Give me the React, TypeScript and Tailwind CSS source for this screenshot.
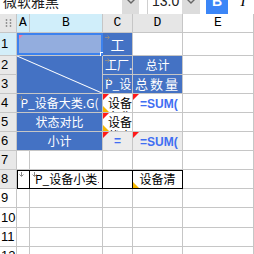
import React from "react";

const cjk = "font-['Noto_Sans_CJK_SC',sans-serif]";

function RedTri() {
  return <span className="absolute left-0 top-0 h-[6px] w-[6px] bg-[#ff1a1a] [clip-path:polygon(0_0,100%_0,0_100%)]" />;
}

function YellowTri() {
  return <span className="absolute bottom-0 left-0 h-[6px] w-[6px] bg-[#f6b800] [clip-path:polygon(0_0,0_100%,100%_100%)]" />;
}

// small gray expand markers in the corner of a cell
function Marker({ dir }: { dir: "down" | "right" }) {
  return (
    <svg className="absolute left-[2px] top-[2px]" width="5" height="5" viewBox="0 0 5 5">
      {dir === "down" ? (
        <path d="M2.5 0V4M0.5 2.5L2.5 4.5L4.5 2.5" stroke="#8a8a8a" strokeWidth="1" fill="none" />
      ) : (
        <path d="M0 2.5H4M2.5 0.5L4.5 2.5L2.5 4.5" stroke="#8a8a8a" strokeWidth="1" fill="none" />
      )}
    </svg>
  );
}

function Chevron() {
  return (
    <svg width="10" height="7" viewBox="0 0 10 7">
      <path d="M1 1L5 5L9 1" stroke="#666" strokeWidth="1.4" fill="none" />
    </svg>
  );
}

const cell = "relative overflow-hidden border-r border-b border-[#c6c6c6]";
const blue = "bg-[#4472c4] text-white";

function RowHead({ n, tone }: { n: number; tone: "sel" | "used" | "none" }) {
  const bg = tone === "sel" ? "bg-[#d3eef9]" : tone === "used" ? "bg-[#e8e8e8]" : "bg-white";
  return (
    <div className={`${cell} ${bg} flex items-center pl-[1px] font-['Liberation_Sans',sans-serif] text-[13px] text-black`}>
      {n}
    </div>
  );
}

export default function App() {
  return (
    <div className="h-[254px] w-[254px] overflow-hidden bg-white">
      {/* toolbar, mostly scrolled off the top */}
      <div className="flex h-[14px] items-end overflow-hidden bg-white">
        <div className={`flex h-[26px] w-[122px] shrink-0 items-center pl-[3px] text-[14px] text-[#222] ${cjk}`}>微软雅黑</div>
        <div className="flex h-[26px] w-[17px] shrink-0 items-center justify-center bg-[#dcdcdc]">
          <Chevron />
        </div>
        <div className="w-[8px] shrink-0" />
        <div className="flex h-[26px] w-[35px] shrink-0 items-center border-l border-[#cfcfcf] pl-[4px] font-['Liberation_Sans',sans-serif] text-[14px] text-[#222]">13.0</div>
        <div className="flex h-[26px] w-[18px] shrink-0 items-center justify-center bg-[#dcdcdc]">
          <Chevron />
        </div>
        <div className="w-[6px] shrink-0" />
        <div className="flex h-[26px] w-[22px] shrink-0 items-center justify-center bg-[#3b86f7] font-['Liberation_Sans',sans-serif] text-[14px] font-bold text-white">B</div>
        <div className="flex h-[26px] w-[30px] shrink-0 items-center justify-center font-['Liberation_Serif',serif] text-[15px] italic text-black">I</div>
      </div>

      <div className="grid grid-cols-[17px_13px_73px_30px_50px_71px] grid-rows-[19px_23px_19px_19px_19px_19px_19px_19px_19px_19px_20px_19px_19px]">
        {/* column headers */}
        <div className={`${cell} flex items-center justify-center bg-[#e6e6e6]`}>
          <svg width="7" height="8" viewBox="0 0 7 8">
            {[1, 4, 7].map((y) =>
              [1.5, 5.5].map((x) => <circle key={`${x}-${y}`} cx={x} cy={y} r="0.9" fill="#8c8c8c" />)
            )}
          </svg>
        </div>
        {[
          ["A", "bg-[#d0eefa]"],
          ["B", "bg-[#d0eefa]"],
          ["C", "bg-[#e6e6e6]"],
          ["D", "bg-[#e6e6e6]"],
          ["E", "bg-white"],
        ].map(([l, bg]) => (
          <div key={l} className={`${cell} ${bg} flex items-center justify-center font-['Liberation_Mono',monospace] text-[13px] text-black`}>
            {l}
          </div>
        ))}

        {/* row 1 */}
        <RowHead n={1} tone="sel" />
        <div className={`${cell} col-span-2 !overflow-visible bg-[#93adde]`}>
          <span className="absolute left-[2px] top-[1px] h-[5px] w-[5px] bg-[#ee7fa6] [clip-path:polygon(0_0,100%_0,0_100%)]" />
          <div className="absolute -right-[1px] bottom-0 left-0 top-0 border-2 border-[#3d82ee]" />
          <div className="absolute -bottom-[2px] -right-[3px] h-[5px] w-[5px] border border-white bg-[#3d82ee]" />
        </div>
        <div className={`${cell} ${blue} flex items-center justify-center text-[14px] ${cjk}`}>
          <Marker dir="right" />工
        </div>
        <div className={cell} />
        <div className={cell} />

        {/* row 2 */}
        <RowHead n={2} tone="used" />
        <div className={`${cell} ${blue} col-span-2 row-span-2`}>
          <svg className="absolute inset-0 h-full w-full" preserveAspectRatio="none" viewBox="0 0 100 100">
            <line x1="0" y1="0" x2="100" y2="100" stroke="white" strokeWidth="1" vectorEffect="non-scaling-stroke" />
          </svg>
        </div>
        <div className={`${cell} ${blue} flex items-center whitespace-nowrap pl-[2px] text-[12px] ${cjk}`}>
          <Marker dir="right" />工厂.
        </div>
        <div className={`${cell} ${blue} flex items-center justify-center text-[12px] ${cjk}`}>总计</div>
        <div className={cell} />

        {/* row 3 */}
        <RowHead n={3} tone="used" />
        <div className={`${cell} ${blue} flex items-center whitespace-nowrap pl-[2px] text-[12px] ${cjk}`}>
          <Marker dir="right" />P_设
        </div>
        <div className={`${cell} ${blue} flex items-center justify-center text-[13px] tracking-[2px] ${cjk}`}>总数量</div>
        <div className={cell} />

        {/* row 4 */}
        <RowHead n={4} tone="used" />
        <div className={`${cell} ${blue} col-span-2 flex items-center justify-center whitespace-nowrap text-[12px] ${cjk}`}>
          <Marker dir="down" />P_设备大类.G(
        </div>
        <div className={`${cell} whitespace-nowrap pl-[5px] pt-[2px] text-[12px] leading-[14px] text-black ${cjk}`}>
          <RedTri />
          <YellowTri />
          设备
          <br />
          名称
        </div>
        <div className={`${cell} pl-[7px] pt-[3px] font-['Liberation_Sans',sans-serif] text-[12px] font-bold leading-[14px] text-[#3f6ef2]`}>
          <RedTri />
          =SUM(
          <br />
          Sum
        </div>
        <div className={cell} />

        {/* row 5 */}
        <RowHead n={5} tone="used" />
        <div className={`${cell} ${blue} col-span-2 flex items-center justify-center text-[12px] ${cjk}`}>状态对比</div>
        <div className={`${cell} whitespace-nowrap pl-[5px] pt-[2px] text-[12px] leading-[14px] text-black ${cjk}`}>
          <RedTri />
          <YellowTri />
          设备
          <br />
          状态
        </div>
        <div className={cell} />
        <div className={cell} />

        {/* row 6 */}
        <RowHead n={6} tone="used" />
        <div className={`${cell} ${blue} col-span-2 flex items-center justify-center text-[12px] ${cjk}`}>小计</div>
        <div className={`${cell} flex items-center justify-center bg-[#ececec] font-['Liberation_Sans',sans-serif] text-[12px] font-bold text-[#3f6ef2]`}>
          <RedTri />=
        </div>
        <div className={`${cell} bg-[#ececec] pl-[7px] pt-[3px] font-['Liberation_Sans',sans-serif] text-[12px] font-bold leading-[14px] text-[#3f6ef2]`}>
          <RedTri />
          =SUM(
          <br />
          Sum
        </div>
        <div className={cell} />

        {/* row 7 */}
        <RowHead n={7} tone="used" />
        <div className={cell} />
        <div className={cell} />
        <div className={cell} />
        <div className={cell} />
        <div className={cell} />

        {/* row 8 */}
        <RowHead n={8} tone="used" />
        <div className={`${cell} border-black shadow-[inset_1px_1px_0_#000]`}>
          <Marker dir="down" />
        </div>
        <div className={`${cell} flex items-center whitespace-nowrap border-black pl-[5px] text-[12px] text-black shadow-[inset_0_1px_0_#000] ${cjk}`}>
          <Marker dir="down" />P_设备小类<span className="ml-[1px] mt-[6px] h-[1px] w-[1px] bg-[#c03060]" />
        </div>
        <div className={`${cell} border-black shadow-[inset_0_1px_0_#000]`} />
        <div className={`${cell} flex items-center justify-center whitespace-nowrap border-black text-[12px] text-black shadow-[inset_0_1px_0_#000] ${cjk}`}>
          <YellowTri />设备清
        </div>
        <div className={cell} />

        {/* rows 9-12 */}
        {[9, 10, 11, 12].map((n) => (
          <React.Fragment key={n}>
            <RowHead n={n} tone="none" />
            <div className={cell} />
            <div className={cell} />
            <div className={cell} />
            <div className={cell} />
            <div className={cell} />
          </React.Fragment>
        ))}
      </div>
    </div>
  );
}
